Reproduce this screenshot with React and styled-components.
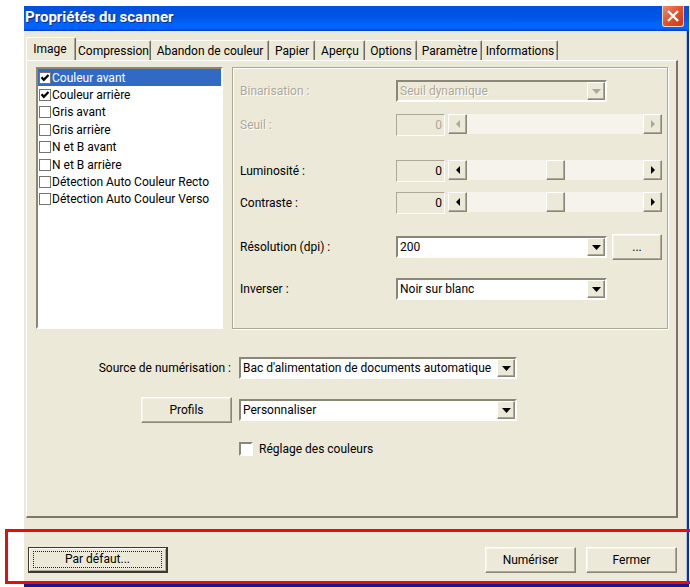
import React, { useState } from "react";
import styled, { createGlobalStyle, css } from "styled-components";

const GlobalStyle = createGlobalStyle`
  * {
    box-sizing: border-box;
  }

  body {
    margin: 0;
    background: #fff;
    color: #000;
    font: 12px/16px Roboto, "Liberation Sans", sans-serif;
  }

  button,
  input,
  select {
    margin: 0;
    font: inherit;
    color: inherit;
  }
`;

const raised = css`
  background: #ece9d8;
  border: 1px solid;
  border-color: #fff #8a8778 #8a8778 #fff;
  box-shadow: inset -1px -1px 0 #aca899;
`;

const sunken = css`
  border: 2px solid;
  border-color: #8a8778 #fff #fff #8a8778;
`;

const Page = styled.div`
  padding: 6px 1px 0 24px;
  overflow: hidden;
`;

const Dialog = styled.main`
  display: flex;
  flex-direction: column;
  background: #ece9d8;
  border-bottom: 3px solid #10189c;
`;

const TitleBar = styled.header`
  display: flex;
  justify-content: space-between;
  height: 25px;
  padding-right: 5px;
  background: linear-gradient(#0050dc, #0054e6 45%, #0066ff 75%, #0062fa 90%, #003cc0);
`;

const Title = styled.h1`
  margin: 0;
  padding-left: 1px;
  color: #fff;
  font: bold 15px/22px Roboto, "Open Sans", sans-serif;
  text-shadow: 1px 1px 0 #0a2e8c;
`;

const CloseButton = styled.button`
  display: flex;
  align-items: center;
  justify-content: center;
  width: 22px;
  height: 21px;
  padding: 0;
  border: 1px solid #f4d8dc;
  border-top: 0;
  border-radius: 0 0 3px 3px;
  background: linear-gradient(135deg, #f08a68, #e2502c 50%, #c83c14);
`;

const Content = styled.div`
  padding: 6px 9px 0 2px;
  border-right: 2px solid #0a2cb0;
  box-shadow: inset -1px 0 0 #a8c4f4;
`;

const TabBar = styled.div`
  display: flex;
  align-items: flex-end;
`;

const Tab = styled.button`
  height: ${(p) => (p.$active ? 23 : 20)}px;
  padding: ${(p) => (p.$active ? "0 2px 0 0" : "1px 0 0")};
  line-height: 16px;
  white-space: nowrap;
  border: 1px solid;
  border-color: #fff #6e6a60 transparent ${(p) => (p.$active ? "#fff" : "transparent")};
  border-bottom: 0;
  border-radius: 2px 2px 0 0;
  background: #ece9d8;
  box-shadow: inset -1px 0 0 #aca899;
  width: ${(p) => p.$width}px;
`;

const Panel = styled.section`
  padding: 6px 8px 59px 9px;
  border: 1px solid #fff;
  border-right: 2px solid #7e706c;
  border-bottom: 2px solid #7e7868;
`;

const Settings = styled.div`
  display: flex;
  gap: 9px;
`;

const SideList = styled.div`
  flex: 0 0 187px;
  ${sunken}
  background: #fff;
`;

const Items = styled.ul`
  display: flex;
  flex-direction: column;
  height: 139px;
  margin: 0;
  padding: 0;
  list-style: none;
`;

const Item = styled.li`
  flex: 1;
  display: flex;
  align-items: center;
  ${(p) => p.$selected && "background: #316ac5; color: #fff;"}

  label {
    display: flex;
    align-items: center;
    gap: 1px;
    padding-left: 1px;
  }
`;

const TickBox = styled.span`
  display: grid;
  flex: none;
  width: ${(p) => (p.$flat ? 12 : 14)}px;
  height: ${(p) => (p.$flat ? 12 : 14)}px;

  input,
  svg {
    grid-area: 1 / 1;
    width: 100%;
    height: 100%;
  }

  input {
    appearance: none;
    background: #fff;
    ${(p) => (p.$flat ? "border: 1px solid #77756a;" : sunken)}
  }

  svg {
    pointer-events: none;
  }
`;

const Group = styled.div`
  flex: 1;
  min-width: 0;
  padding: 12px 5px 28px 7px;
  border: 1px solid #aca899;
  box-shadow: inset 1px 1px 0 #fff, 1px 1px 0 #fff;
`;

const Row = styled.div`
  display: grid;
  grid-template-columns: 151px minmax(0, 1fr) 50px;
  column-gap: 5px;
  align-items: center;
  margin-top: ${(p) => p.$gap || 0}px;
  ${(p) => p.$disabled && "color: #aca899; text-shadow: 1px 1px 0 #fff;"}
`;

const SliderControls = styled.div`
  grid-column: 2 / 4;
  display: flex;
  gap: 3px;
`;

const NumberBox = styled.input`
  width: 49px;
  height: 22px;
  padding: 0 2px 0 0;
  border: 1px solid;
  border-color: #aca899 #fff #fff #aca899;
  background: transparent;
  text-align: right;
`;

const ScrollBar = styled.div`
  flex: 1;
  display: flex;
  height: 20px;
  min-width: 0;
`;

const ArrowButton = styled.button`
  ${raised}
  display: flex;
  align-items: center;
  justify-content: center;
  flex: none;
  width: 19px;
  padding: 0;
`;

const Track = styled.input`
  appearance: none;
  flex: 1;
  min-width: 0;
  background: #f5f3eb;

  &::-webkit-slider-thumb {
    appearance: none;
    width: 19px;
    height: 20px;
    border-radius: 0;
    ${raised}
    ${(p) => p.disabled && "visibility: hidden;"}
  }
`;

const SelectBox = styled.div`
  display: grid;
  ${sunken}
  background: ${(p) => (p.$disabled ? "transparent" : "#fff")};

  select {
    grid-area: 1 / 1;
    appearance: none;
    width: 100%;
    height: 18px;
    padding: 0 20px 0 2px;
    border: 0;
    background: transparent;
    opacity: 1;
    text-shadow: inherit;
  }
`;

const SelectArrow = styled.span`
  ${raised}
  grid-area: 1 / 1;
  justify-self: end;
  display: flex;
  align-items: center;
  justify-content: center;
  width: 18px;
  pointer-events: none;
`;

const Button = styled.button`
  ${raised}
  height: 26px;
  padding: 0;
  box-shadow: inset -1px -1px 0 #aca899, inset 1px 1px 0 #f6f4ea;
`;

const DefaultButton = styled(Button)`
  width: 140px;
  padding: 2px;
  border: 1px solid #3c3a30;
  border-width: 1px 2px 2px 1px;
  box-shadow: inset 1px 1px 0 #fff, inset -1px -1px 0 #aca899;

  span {
    display: block;
    margin: 0 2px;
    border: 1px dotted #222;
    line-height: 15px;
  }
`;

const Source = styled.div`
  display: grid;
  grid-template-columns: 196px minmax(0, 278px);
  gap: 20px 7px;
  align-items: center;
  margin-top: 28px;
`;

const SourceLabel = styled.label`
  justify-self: end;
  padding-right: 1px;
`;

const ProfileButton = styled(Button)`
  justify-self: end;
  width: 91px;
  margin: -2px 0;
`;

const ColorCheck = styled.label`
  grid-column: 2;
  display: flex;
  align-items: center;
  gap: 6px;
`;

const Footer = styled.footer`
  position: relative;
  display: flex;
  gap: 10px;
  padding: 29px 1px 11px 2px;
`;

const Spacer = styled.div`
  flex: 1;
`;

const FooterButton = styled(Button)`
  width: 91px;
`;

/* Red callout drawn over the bottom buttons, runs off the right side */
const Callout = styled.div`
  position: absolute;
  inset: 11px -20px 0 -21px;
  border: 3px solid #e80c0c;
  pointer-events: none;
`;

const TABS = [
  ["Image", 50],
  ["Compression", 75],
  ["Abandon de couleur", 118],
  ["Papier", 46],
  ["Aperçu", 50],
  ["Options", 52],
  ["Paramètre", 65],
  ["Informations", 76],
];

const SIDES = [
  "Couleur avant",
  "Couleur arrière",
  "Gris avant",
  "Gris arrière",
  "N et B avant",
  "N et B arrière",
  "Détection Auto Couleur Recto",
  "Détection Auto Couleur Verso",
];

const ARROWS = {
  left: "M5 0v8L1 4z",
  right: "M1 0v8l4-4z",
};

function Check({ flat, checked, onChange }) {
  return (
    <TickBox $flat={flat}>
      <input type="checkbox" checked={checked} onChange={onChange} />
      {checked && (
        <svg viewBox="0 0 12 12">
          <path d="M2.5 5.2l2.3 2.6 4.7-4.8" fill="none" stroke="#000" strokeWidth="2.2" />
        </svg>
      )}
    </TickBox>
  );
}

function Select({ id, label, options, disabled }) {
  return (
    <SelectBox $disabled={disabled}>
      <select id={id} aria-label={label} disabled={disabled}>
        {options.map((o) => (
          <option key={o}>{o}</option>
        ))}
      </select>
      <SelectArrow>
        <svg width="9" height="5" viewBox="0 0 9 5">
          <path d="M0 0h9L4.5 5z" fill={disabled ? "#aca899" : "#000"} />
        </svg>
      </SelectArrow>
    </SelectBox>
  );
}

function SliderRow({ id, label, gap, disabled }) {
  const [value, setValue] = useState(0);
  const fill = disabled ? "#aca899" : "#000";
  const step = (n) => setValue(Math.max(-127, Math.min(127, value + n)));

  return (
    <Row $gap={gap} $disabled={disabled}>
      <label htmlFor={id}>{label}</label>
      <SliderControls>
        <NumberBox value={value} readOnly disabled={disabled} aria-label={label} />
        <ScrollBar>
          <ArrowButton disabled={disabled} aria-label="Diminuer" onClick={() => step(-1)}>
            <svg width="6" height="8">
              <path d={ARROWS.left} fill={fill} />
            </svg>
          </ArrowButton>
          <Track
            id={id}
            type="range"
            min="-127"
            max="127"
            value={value}
            disabled={disabled}
            onChange={(e) => setValue(Number(e.target.value))}
          />
          <ArrowButton disabled={disabled} aria-label="Augmenter" onClick={() => step(1)}>
            <svg width="6" height="8">
              <path d={ARROWS.right} fill={fill} />
            </svg>
          </ArrowButton>
        </ScrollBar>
      </SliderControls>
    </Row>
  );
}

export default function App() {
  const [tab, setTab] = useState("Image");
  const [sides, setSides] = useState(["Couleur avant", "Couleur arrière"]);
  const [adjust, setAdjust] = useState(false);

  const toggleSide = (side) =>
    setSides(sides.includes(side) ? sides.filter((s) => s !== side) : [...sides, side]);

  return (
    <Page>
      <GlobalStyle />
      <Dialog>
        <TitleBar>
          <Title>Propriétés du scanner</Title>
          <CloseButton aria-label="Fermer la fenêtre">
            <svg width="14" height="14" viewBox="0 0 14 14">
              <path d="M2 2l10 10M12 2L2 12" stroke="#fff" strokeWidth="2.4" />
            </svg>
          </CloseButton>
        </TitleBar>
        <Content>
          <TabBar role="tablist">
            {TABS.map(([name, width]) => (
              <Tab
                key={name}
                role="tab"
                aria-selected={name === tab}
                $active={name === tab}
                $width={width}
                onClick={() => setTab(name)}
              >
                {name}
              </Tab>
            ))}
          </TabBar>
          <Panel>
            <Settings>
              <SideList>
                <Items>
                  {SIDES.map((side, i) => (
                    <Item key={side} $selected={i === 0}>
                      <label>
                        <Check
                          flat
                          checked={sides.includes(side)}
                          onChange={() => toggleSide(side)}
                        />
                        {side}
                      </label>
                    </Item>
                  ))}
                </Items>
              </SideList>
              <Group>
                <Row $disabled>
                  <label htmlFor="binarisation">Binarisation :</label>
                  <Select id="binarisation" options={["Seuil dynamique"]} disabled />
                </Row>
                <SliderRow id="seuil" label="Seuil :" gap={12} disabled />
                <SliderRow id="luminosite" label="Luminosité :" gap={24} />
                <SliderRow id="contraste" label="Contraste :" gap={10} />
                <Row $gap={20}>
                  <label htmlFor="resolution">Résolution (dpi) :</label>
                  <Select id="resolution" options={["200", "300"]} />
                  <Button>...</Button>
                </Row>
                <Row $gap={18}>
                  <label htmlFor="inverser">Inverser :</label>
                  <Select id="inverser" options={["Noir sur blanc", "Blanc sur noir"]} />
                </Row>
              </Group>
            </Settings>
            <Source>
              <SourceLabel htmlFor="source">Source de numérisation :</SourceLabel>
              <Select id="source" options={["Bac d'alimentation de documents automatique"]} />
              <ProfileButton>Profils</ProfileButton>
              <Select id="profil" label="Profils" options={["Personnaliser"]} />
              <ColorCheck>
                <Check checked={adjust} onChange={() => setAdjust(!adjust)} />
                Réglage des couleurs
              </ColorCheck>
            </Source>
          </Panel>
          <Footer>
            <DefaultButton>
              <span>Par défaut...</span>
            </DefaultButton>
            <Spacer />
            <FooterButton>Numériser</FooterButton>
            <FooterButton>Fermer</FooterButton>
            <Callout />
          </Footer>
        </Content>
      </Dialog>
    </Page>
  );
}
